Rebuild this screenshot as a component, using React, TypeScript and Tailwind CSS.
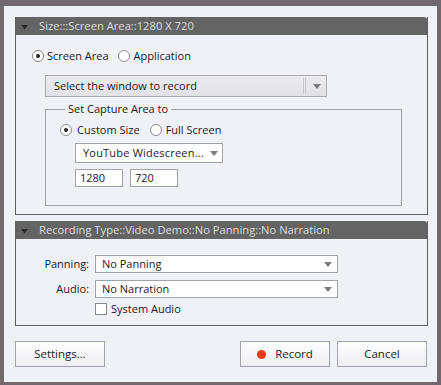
import React from "react";

const font = { fontFamily: '"Open Sans", "Noto Sans", sans-serif' };

function Radio({ checked }: { checked?: boolean }) {
  return (
    <span className="w-[12px] h-[12px] rounded-full border border-[#8a8a90] bg-white flex items-center justify-center shrink-0">
      {checked && <span className="w-[4px] h-[4px] rounded-full bg-[#222]" />}
    </span>
  );
}

function Arrow() {
  return (
    <svg width="8" height="5" viewBox="0 0 8 5" className="shrink-0">
      <path d="M0 0 L8 0 L4 5 Z" fill="#7a7a80" />
    </svg>
  );
}

function Header({ text }: { text: string }) {
  return (
    <div className="h-[18px] bg-[#646464] rounded-tr-[3px] flex items-center text-[#dcdcdc] text-[11.2px] leading-none whitespace-nowrap">
      <svg width="7" height="5" viewBox="0 0 7 5" className="ml-[5px] mr-[11px] mt-[3px] shrink-0">
        <path d="M0 0 L7 0 L3.5 4.5 Z" fill="#2a2a2a" />
      </svg>
      <span>{text}</span>
    </div>
  );
}

function Button({ children }: { children: React.ReactNode }) {
  return (
    <button className="w-[90px] h-[26px] border border-[#a3a3ae] bg-gradient-to-b from-[#fdfdfe] to-[#eeeef2] text-[11.5px] text-[#1c1c1c] flex items-center justify-center">
      {children}
    </button>
  );
}

export default function App() {
  return (
    <div className="w-[441px] h-[385px] bg-[#6f696e] pt-[6px] pl-[4px] pr-[4px] pb-[3px]" style={font}>
      <div className="w-full h-full bg-[#f0f1f6] pl-[11px] pr-[9px] pt-[11px] flex flex-col text-[11px] text-[#1c1c1c] whitespace-nowrap">
        {/* Panel 1 */}
        <div className="h-[198px] border-l border-r border-b border-[#5e5e5e] flex flex-col">
          <Header text="Size:::Screen Area::1280 X 720" />
          <div className="pl-[16px] pt-[13px] flex flex-col">
            <div className="h-[16px] flex items-center">
              <Radio checked />
              <span className="ml-[3px]">Screen Area</span>
              <span className="ml-[9px]"><Radio /></span>
              <span className="ml-[4px]">Application</span>
            </div>
            <div className="ml-[13px] mt-[11px] w-[282px] h-[22px] border border-[#a9a9ae] bg-gradient-to-b from-[#ececf0] to-[#e2e2e6] flex items-center">
              <span className="flex-1 pl-[8px] text-[#222]">Select the window to record</span>
              <span className="w-[3px] h-[16px] border-l border-r border-[#c8c8cc] mr-[7px]" />
              <span className="mr-[5px]"><Arrow /></span>
            </div>
            <fieldset className="ml-[13px] mt-[4px] w-[357px] h-[105px] border border-[#a2a2a8] pl-[14px]">
              <legend className="ml-[5px] px-[3px] leading-[16px]">Set Capture Area to</legend>
              <div className="h-[16px] flex items-center mt-[5px]">
                <Radio checked />
                <span className="ml-[5px]">Custom Size</span>
                <span className="ml-[10px]"><Radio /></span>
                <span className="ml-[4px]">Full Screen</span>
              </div>
              <div className="ml-[15px] mt-[5px] w-[148px] h-[20px] border border-[#a2a2aa] bg-white flex items-center">
                <span className="flex-1 pl-[7px] tracking-[0.2px]">YouTube Widescreen...</span>
                <span className="mr-[4px]"><Arrow /></span>
              </div>
              <div className="ml-[15px] mt-[6px] flex gap-[7px]">
                <div className="w-[48px] h-[18px] border border-[#a2a2aa] bg-white pl-[4px] flex items-center">1280</div>
                <div className="w-[48px] h-[18px] border border-[#a2a2aa] bg-white pl-[4px] flex items-center">720</div>
              </div>
            </fieldset>
          </div>
        </div>
        {/* Panel 2 */}
        <div className="mt-[6px] h-[105px] border-l border-r border-b border-[#5e5e5e] flex flex-col">
          <Header text="Recording Type::Video Demo::No Panning::No Narration" />
          <div className="pt-[16px] flex flex-col">
            <div className="flex items-center">
              <span className="w-[73px] text-right">Panning:</span>
              <div className="ml-[6px] w-[243px] h-[18px] border border-[#a2a2aa] bg-white flex items-center">
                <span className="flex-1 pl-[6px]">No Panning</span>
                <span className="mr-[5px]"><Arrow /></span>
              </div>
            </div>
            <div className="flex items-center mt-[7px]">
              <span className="w-[73px] text-right">Audio:</span>
              <div className="ml-[6px] w-[243px] h-[18px] border border-[#a2a2aa] bg-white flex items-center">
                <span className="flex-1 pl-[6px]">No Narration</span>
                <span className="mr-[5px]"><Arrow /></span>
              </div>
            </div>
            <div className="flex items-center mt-[3px] ml-[79px] h-[16px]">
              <span className="w-[12px] h-[12px] border border-[#8a8a90] bg-white" />
              <span className="ml-[4px]">System Audio</span>
            </div>
          </div>
        </div>
        {/* Buttons */}
        <div className="mt-[15px] flex items-center">
          <Button>Settings...</Button>
          <div className="flex-1" />
          <Button>
            <span className="w-[9px] h-[9px] rounded-full bg-[#e83d14] mr-[9px]" />
            Record
          </Button>
          <span className="w-[7px]" />
          <Button>Cancel</Button>
          <span className="w-[1px]" />
        </div>
      </div>
    </div>
  );
}
